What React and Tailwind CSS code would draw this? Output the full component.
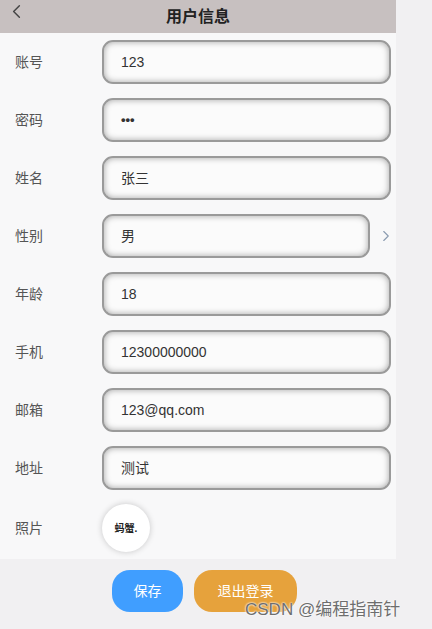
import { ChevronLeft, ChevronRight } from "lucide-react";

const fields = [
  { label: "账号", value: "123" },
  { label: "密码", value: "•••", password: true },
  { label: "姓名", value: "张三" },
  { label: "性别", value: "男", select: true },
  { label: "年龄", value: "18" },
  { label: "手机", value: "12300000000" },
  { label: "邮箱", value: "123@qq.com" },
  { label: "地址", value: "测试" },
];

function Field({ label, value, password, select }) {
  return (
    <div className="flex h-[58px] items-center">
      <div className="w-[102px] shrink-0 pl-[15px] text-[14px] text-[#555]">{label}</div>
      <div className="flex min-w-0 flex-1 items-center">
        <div
          className={`flex h-[44px] shrink-0 items-center rounded-[11px] border-2 border-[#9a9a9a] bg-[#fbfbfb] pl-[17px] text-[14px] text-[#333] shadow-[inset_0_0_6px_rgba(0,0,0,0.35)] ${
            select ? "w-[268px]" : "w-[289px]"
          }`}
        >
          <span className={password ? "text-[13px] font-bold tracking-[0px]" : ""}>{value}</span>
        </div>
        {select && (
          <ChevronRight className="ml-[7px] h-[18px] w-[18px] shrink-0 text-[#8a9bb0]" strokeWidth={1.5} />
        )}
      </div>
    </div>
  );
}

export default function App() {
  return (
    <div
      className="relative h-[629px] w-[432px] bg-[#f1f0f2]"
      style={{ fontFamily: '"Liberation Sans", "Noto Sans CJK SC", sans-serif' }}
    >
      <div className="w-[396px]">
        <header className="relative flex h-[33px] items-center justify-center bg-[#c7c0c0]">
          <ChevronLeft className="absolute left-[5px] top-[0px] h-[23px] w-[23px] text-[#444]" strokeWidth={1.5} />
          <span className="text-[16px] font-bold text-[#222]">用户信息</span>
        </header>
        <div className="bg-[#f8f8f9]">
          {fields.map((f) => (
            <Field key={f.label} {...f} />
          ))}
          <div className="flex h-[62px] items-center">
            <div className="w-[102px] shrink-0 pl-[15px] text-[14px] text-[#555]">照片</div>
            <div className="flex h-[48px] w-[48px] items-center justify-center rounded-full bg-white shadow-[0_0_6px_rgba(0,0,0,0.2)]">
              <span className="text-[10px] font-bold text-[#222]">蚂蟹.</span>
            </div>
          </div>
        </div>
        <div className="flex gap-[11px] pl-[112px] pt-[11px]">
          <button className="h-[42px] w-[71px] rounded-[18px] bg-[#409eff] text-[14px] text-white">保存</button>
          <button className="h-[42px] w-[103px] rounded-[18px] bg-[#e6a23c] text-[14px] text-white">退出登录</button>
        </div>
      </div>
      <div
        className="absolute left-[245px] top-[597px] text-[17px] text-[#6e6e6e]"
        style={{ textShadow: "0 0 2px #fff, 0 0 2px #fff" }}
      >
        CSDN @编程指南针
      </div>
    </div>
  );
}
